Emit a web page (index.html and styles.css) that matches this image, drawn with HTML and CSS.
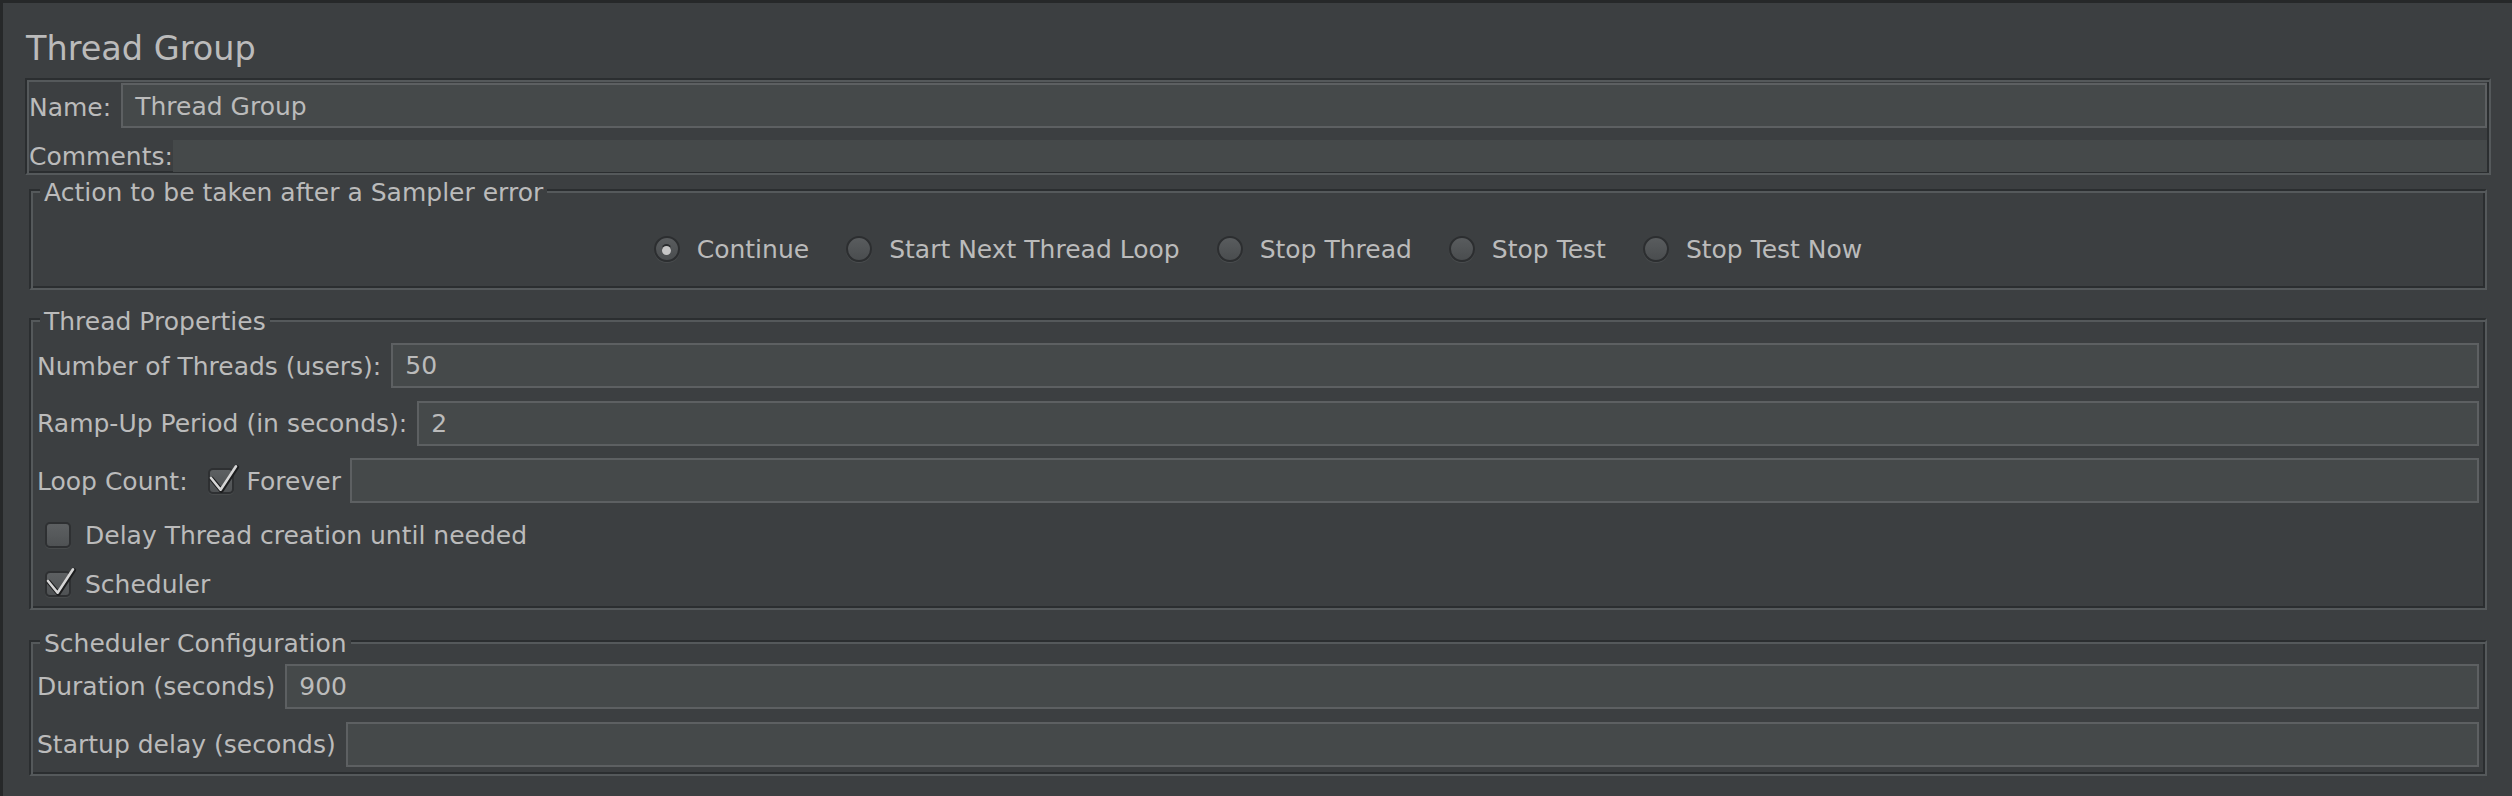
FILE: index.html
```html
<!DOCTYPE html>
<html lang="en">
<head>
<meta charset="utf-8">
<title>Thread Group</title>
<link rel="stylesheet" href="styles.css">
</head>
<body>
<div class="page">
  <h1 class="title">Thread Group</h1>

  <div class="etched name-panel">
    <div class="row name-row">
      <span class="label">Name:</span>
      <div class="field">Thread Group</div>
    </div>
    <div class="row comments-row">
      <span class="label">Comments:</span>
      <div class="comments"></div>
    </div>
  </div>

  <div class="etched group action">
    <div class="legend">Action to be taken after a Sampler error</div>
    <div class="radios">
      <div class="radio-item"><span class="radio on"></span><span class="rtext">Continue</span></div>
      <div class="radio-item"><span class="radio"></span><span class="rtext">Start Next Thread Loop</span></div>
      <div class="radio-item"><span class="radio"></span><span class="rtext">Stop Thread</span></div>
      <div class="radio-item"><span class="radio"></span><span class="rtext">Stop Test</span></div>
      <div class="radio-item"><span class="radio"></span><span class="rtext">Stop Test Now</span></div>
    </div>
  </div>

  <div class="etched group props">
    <div class="legend">Thread Properties</div>
    <div class="rows">
      <div class="row frow">
        <span class="label">Number of Threads (users):</span>
        <div class="field">50</div>
      </div>
      <div class="row frow">
        <span class="label">Ramp-Up Period (in seconds):</span>
        <div class="field">2</div>
      </div>
      <div class="row frow loop-row">
        <span class="label">Loop Count:</span>
        <span class="cb loop-cb">
          <svg class="check" viewBox="0 0 32 32" width="32" height="32"><path class="ck-dark" d="M5.8 16 L15.4 27.5 L30.8 4.1"/><path class="ck-light" d="M5 15 L14.6 26.7 L30 3.3"/></svg>
        </span>
        <span class="label forever">Forever</span>
        <div class="field"></div>
      </div>
    </div>
    <div class="cbrow delay-row">
      <span class="cb"></span>
      <span class="label">Delay Thread creation until needed</span>
    </div>
    <div class="cbrow sched-row">
      <span class="cb">
        <svg class="check" viewBox="0 0 32 32" width="32" height="32"><path class="ck-dark" d="M5.8 16 L15.4 27.5 L30.8 4.1"/><path class="ck-light" d="M5 15 L14.6 26.7 L30 3.3"/></svg>
      </span>
      <span class="label">Scheduler</span>
    </div>
  </div>

  <div class="etched group sched">
    <div class="legend">Scheduler Configuration</div>
    <div class="rows sched-rows">
      <div class="row frow">
        <span class="label">Duration (seconds)</span>
        <div class="field">900</div>
      </div>
      <div class="row frow">
        <span class="label">Startup delay (seconds)</span>
        <div class="field"></div>
      </div>
    </div>
  </div>
</div>
</body>
</html>
```

FILE: styles.css
```css
* {
  box-sizing: border-box;
}

html, body {
  margin: 0;
  padding: 0;
}

body {
  width: 2512px;
  height: 796px;
  overflow: hidden;
  background: #3c3f41;
  border-top: 3px solid #262829;
  border-left: 3px solid #262829;
  font-family: "DejaVu Sans", "Liberation Sans", sans-serif;
  font-size: 25px;
  line-height: 29px;
  color: #bbbbbb;
}

.page {
  display: flex;
  flex-direction: column;
}

.title {
  margin: 26px 0 10px 23px;
  font-size: 33.5px;
  line-height: 39px;
  font-weight: normal;
  color: #bbbbbb;
}

/* etched border: dark outer / light inner on top-left, reverse on bottom-right */
.etched {
  border-style: solid;
  border-width: 2px;
  border-color: #2b2e30 #55595b #55595b #2b2e30;
  box-shadow: inset 2px 2px 0 #55595b, inset -2px -2px 0 #2b2e30;
}

.name-panel {
  margin: 0 21px 0 22px;
  padding: 3px 2px 1px 2px;
  display: flex;
  flex-direction: column;
  gap: 12px;
}

.row {
  display: flex;
  align-items: center;
}

.label {
  white-space: nowrap;
  padding-top: 1px;
  flex: none;
}

.field {
  flex: 1;
  height: 45px;
  border: 2px solid #5d6062;
  background: #45494a;
  padding: 6px 12px 0 12px;
  line-height: 29px;
  white-space: nowrap;
}

.name-row {
  gap: 10px;
}

.name-row .field {
  padding-top: 7px;
}

.name-row .label {
  padding-top: 3px;
}

.comments-row {
  height: 32px;
}

.comments {
  flex: 1;
  height: 32px;
  background: #45494a;
}

.group {
  margin: 0 25px 0 26px;
  display: flex;
  flex-direction: column;
}

.legend {
  width: fit-content;
  margin: -13px 0 0 9px;
  padding: 0 4px;
  background: #3c3f41;
  line-height: 29px;
  white-space: nowrap;
}

.props .legend,
.sched .legend {
  margin-left: 3px;
}

.action {
  margin-top: 14px;
  padding-bottom: 24px;
}

.radios {
  margin-top: 27px;
  display: flex;
  justify-content: center;
  gap: 37px;
}

.radio-item {
  display: flex;
  align-items: center;
  gap: 17px;
}

.radio {
  width: 26px;
  height: 26px;
  border-radius: 50%;
  border: 2px solid #2c2e30;
  background: linear-gradient(#595c5e, #4a4d4f);
  box-shadow: 0 1px 1px rgba(255, 255, 255, 0.08);
  display: flex;
  align-items: center;
  justify-content: center;
  flex: none;
}

.radio.on::after {
  content: "";
  width: 9px;
  height: 9px;
  margin-top: 3px;
  border-radius: 50%;
  background: #c6c6c6;
  box-shadow: 0 -2px 0 #2a2c2e;
}

.rtext {
  white-space: nowrap;
  padding-top: 1px;
}

.props {
  margin-top: 28px;
  padding: 0 6px 9px 6px;
}

.rows {
  margin-top: 7px;
  display: flex;
  flex-direction: column;
  gap: 12.5px;
}

.frow {
  gap: 10px;
}

.loop-row {
  gap: 0;
}

.loop-cb {
  margin-left: 20px;
}

.forever {
  margin-left: 13px;
  margin-right: 9px;
}

.cb {
  position: relative;
  width: 26px;
  height: 26px;
  flex: none;
  border: 2px solid #2e3032;
  border-radius: 5px;
  background: linear-gradient(#5d6062, #4f5254);
  box-shadow: 0 1px 1px rgba(255, 255, 255, 0.07);
}

.check {
  position: absolute;
  left: -4px;
  top: -7px;
  overflow: visible;
}

.ck-dark {
  fill: none;
  stroke: #1c1d1e;
  stroke-width: 4.6;
  stroke-linecap: round;
  stroke-linejoin: round;
}

.ck-light {
  fill: none;
  stroke: #d6d6d6;
  stroke-width: 2.6;
  stroke-linecap: round;
  stroke-linejoin: round;
}

.cbrow {
  display: flex;
  align-items: center;
  gap: 14px;
  padding-left: 8px;
}

.delay-row {
  margin-top: 16.5px;
}

.sched-row {
  margin-top: 19.5px;
}

.sched {
  margin-top: 30px;
  padding: 0 6px 7px 6px;
}

.sched-rows {
  margin-top: 5.5px;
  gap: 13.3px;
}
```
